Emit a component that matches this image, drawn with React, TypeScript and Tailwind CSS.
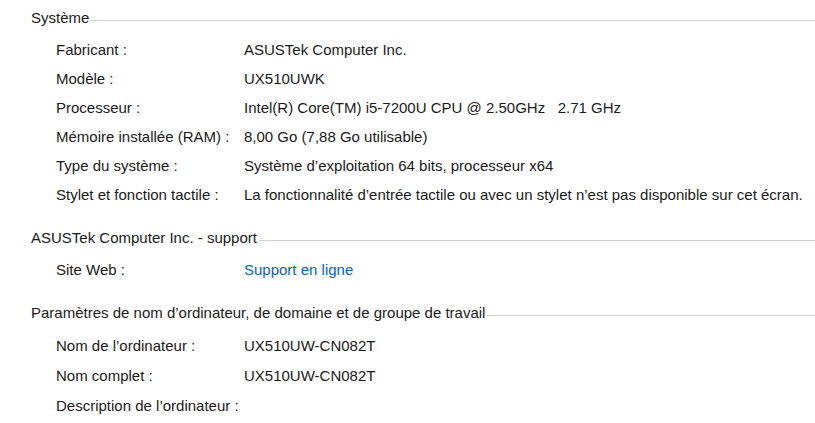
const font = { fontFamily: '"Segoe UI", "Liberation Sans", Arial, sans-serif' };

type Row = { label: string; value?: string; link?: boolean };

const systeme: Row[] = [
  { label: "Fabricant :", value: "ASUSTek Computer Inc." },
  { label: "Modèle :", value: "UX510UWK" },
  { label: "Processeur :", value: "Intel(R) Core(TM) i5-7200U CPU @ 2.50GHz   2.71 GHz" },
  { label: "Mémoire installée (RAM) :", value: "8,00 Go (7,88 Go utilisable)" },
  { label: "Type du système :", value: "Système d’exploitation 64 bits, processeur x64" },
  {
    label: "Stylet et fonction tactile :",
    value: "La fonctionnalité d’entrée tactile ou avec un stylet n’est pas disponible sur cet écran.",
  },
];

const support: Row[] = [{ label: "Site Web :", value: "Support en ligne", link: true }];

const ordinateur: Row[] = [
  { label: "Nom de l’ordinateur :", value: "UX510UW-CN082T" },
  { label: "Nom complet :", value: "UX510UW-CN082T" },
  { label: "Description de l’ordinateur :" },
];

function Section({ title, rows, rowH, className }: { title: string; rows: Row[]; rowH: string; className?: string }) {
  return (
    <section className={className}>
      <div className="flex items-center h-[29px] mb-[3px]">
        <span className="whitespace-pre">{title}</span>
        <div className="flex-1 h-px bg-[#cfcfcf] ml-[2px] mt-[3px]" />
      </div>
      {rows.map((r) => (
        <div key={r.label} className={`flex items-center pl-[25px] ${rowH}`}>
          <span className="w-[188px] shrink-0 whitespace-pre">{r.label}</span>
          {r.value && (
            <span className={`whitespace-pre ${r.link ? "text-[#0066cc]" : ""}`}>{r.value}</span>
          )}
        </div>
      ))}
    </section>
  );
}

export default function App() {
  return (
    <div className="w-[815px] h-[423px] bg-white overflow-hidden pl-[31px] pt-[4px] text-[15px] text-[#1a1a1a]" style={font}>
      <Section title="Système" rows={systeme} rowH="h-[29px]" />
      <Section title="ASUSTek Computer Inc. - support" rows={support} rowH="h-[29px]" className="mt-[14px]" />
      <Section
        title="Paramètres de nom d’ordinateur, de domaine et de groupe de travail"
        rows={ordinateur}
        rowH="h-[30px]"
        className="mt-[14px]"
      />
    </div>
  );
}
